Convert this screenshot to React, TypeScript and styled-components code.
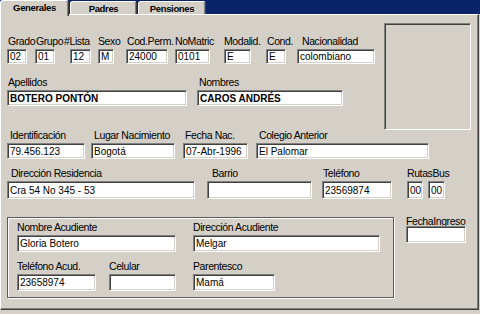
import React from "react";
import styled, { createGlobalStyle } from "styled-components";

const Global = createGlobalStyle`
  html, body { margin: 0; padding: 0; background: #d4d0c8; }
  body {
    width: 480px; height: 314px; overflow: hidden;
    font-family: "Liberation Sans", Arial, sans-serif;
  }
`;

const Window = styled.div`
  width: 480px;
  height: 314px;
  background: #d4d0c8;
  display: flex;
  flex-direction: column;
  overflow: hidden;
`;

const TabStrip = styled.div`
  height: 14px;
  flex: none;
  background: #0a246a;
  display: flex;
  align-items: flex-end;
  position: relative;
  z-index: 2;
`;

const Tab = styled.div<{ $active?: boolean; $w: number; $ml?: number }>`
  width: ${(p) => p.$w}px;
  height: ${(p) => (p.$active ? 16 : 13)}px;
  margin-bottom: ${(p) => (p.$active ? -2 : 0)}px;
  margin-left: ${(p) => p.$ml ?? 0}px;
  box-sizing: border-box;
  background: #d4d0c8;
  border-top: 1px solid #fff;
  border-left: 1px solid #fff;
  border-right: 1px solid #404040;
  box-shadow: inset -1px 0 #808080;
  border-radius: 3px 3px 0 0;
  font: bold 9.5px "Liberation Sans", Arial, sans-serif;
  letter-spacing: -0.35px;
  color: #000;
  display: flex;
  align-items: center;
  justify-content: center;
  padding-bottom: ${(p) => (p.$active ? 2 : 0)}px;
`;

const Panel = styled.div`
  flex: none;
  height: 296px;
  margin-right: 1px;
  box-sizing: border-box;
  border-top: 1px solid #fff;
  border-left: 1px solid #fff;
  border-right: 1px solid #404040;
  border-bottom: 1px solid #404040;
  box-shadow: inset -1px -1px #808080;
  padding-left: 6px;
  display: flex;
  flex-direction: column;
`;

const TopSection = styled.div`
  display: flex;
  align-items: flex-start;
`;

const LeftColumn = styled.div`
  display: flex;
  flex-direction: column;
  padding-top: 20px;
  width: 368px;
`;

const Photo = styled.div`
  width: 87px;
  height: 107px;
  margin-top: 8px;
  margin-left: 9px;
  box-sizing: border-box;
  border-top: 1px solid #808080;
  border-left: 1px solid #808080;
  border-right: 1px solid #fff;
  border-bottom: 1px solid #fff;
  box-shadow: inset 1px 1px #404040, inset -1px -1px #d4d0c8;
`;

const Row = styled.div<{ $mt?: number }>`
  display: flex;
  align-items: flex-start;
  margin-top: ${(p) => p.$mt ?? 0}px;
`;

const Field = styled.div<{ $w: number; $ml?: number }>`
  display: flex;
  flex-direction: column;
  flex: none;
  width: ${(p) => p.$w}px;
  margin-left: ${(p) => p.$ml ?? 0}px;
`;

const Label = styled.div<{ $dx?: number; $gap?: number }>`
  font-size: 10.5px;
  letter-spacing: -0.4px;
  line-height: 12px;
  height: 12px;
  white-space: nowrap;
  color: #000;
  margin-left: ${(p) => p.$dx ?? 0}px;
  margin-bottom: ${(p) => p.$gap ?? 2}px;
`;

const InputPair = styled.div`
  display: flex;
  gap: 5px;
`;

const Input = styled.div<{ $h?: number; $w?: number; $bold?: boolean }>`
  height: ${(p) => p.$h ?? 16}px;
  width: ${(p) => (p.$w ? `${p.$w}px` : "auto")};
  flex: none;
  box-sizing: border-box;
  background: #fff;
  border-top: 1px solid #808080;
  border-left: 1px solid #808080;
  border-right: 1px solid #fff;
  border-bottom: 1px solid #fff;
  box-shadow: inset 1px 1px #404040, inset -1px -1px #d4d0c8;
  font-size: 10px;
  font-weight: ${(p) => (p.$bold ? "bold" : "normal")};
  color: #000;
  padding-left: 2px;
  display: flex;
  align-items: center;
  white-space: nowrap;
  overflow: hidden;
`;

const BottomSection = styled.div`
  display: flex;
  align-items: flex-start;
  margin-top: 15px;
`;

const GroupBox = styled.div`
  width: 387px;
  height: 81px;
  margin-top: 3px;
  box-sizing: border-box;
  border: 1px solid #5a5a5a;
  box-shadow: 1px 1px 0 #fff, inset 1px 1px 0 #fff;
  padding: 3px 0 0 9px;
  display: flex;
  flex-direction: column;
`;

const SideField = styled(Field)`
  margin-top: 1px;
`;

type F = { label: string; value?: string; w: number; ml?: number; dx?: number; h?: number; bold?: boolean };

const FieldBox = ({ label, value, w, ml, dx, h, bold }: F) => (
  <Field $w={w} $ml={ml}>
    <Label $dx={dx}>{label}</Label>
    <Input $h={h} $bold={bold}>{value}</Input>
  </Field>
);

export default function App() {
  return (
    <Window>
      <Global />
      <TabStrip>
        <Tab $active $w={69}>Generales</Tab>
        <Tab $w={67} $ml={1}>Padres</Tab>
        <Tab $w={68} $ml={1}>Pensiones</Tab>
      </TabStrip>
      <Panel>
        <TopSection>
          <LeftColumn>
            <Row>
              <FieldBox label="Grado" value="02" w={20} dx={1} h={15} />
              <FieldBox label="Grupo" value="01" w={20} ml={8} dx={1} h={15} />
              <FieldBox label="#Lista" value="12" w={21} ml={15} dx={-6} h={15} />
              <FieldBox label="Sexo" value="M" w={16} ml={7} h={15} />
              <FieldBox label="Cod.Perm." value="24000" w={42} ml={12} dx={1} h={15} />
              <FieldBox label="NoMatric" value="0101" w={35} ml={7} h={15} />
              <FieldBox label="Modalid." value="E" w={27} ml={14} h={15} />
              <FieldBox label="Cond." value="E" w={20} ml={15} dx={1} h={15} />
              <FieldBox label="Nacionalidad" value="colombiano" w={78} ml={11} dx={5} h={15} />
            </Row>
            <Row $mt={12}>
              <FieldBox label="Apellidos" value="BOTERO PONTÓN" w={180} dx={1} bold />
              <FieldBox label="Nombres" value="CAROS ANDRÉS" w={146} ml={10} dx={2} bold />
            </Row>
          </LeftColumn>
          <Photo />
        </TopSection>
        <Row $mt={-1}>
          <FieldBox label="Identificación" value="79.456.123" w={78} dx={3} />
          <FieldBox label="Lugar Nacimiento" value="Bogotá" w={84} ml={6} dx={3} />
          <FieldBox label="Fecha Nac." value="07-Abr-1996" w={65} ml={8} dx={2} />
          <FieldBox label="Colegio Anterior" value="El Palomar" w={173} ml={8} dx={3} />
        </Row>
        <Row $mt={8}>
          <FieldBox label="Dirección Residencia" value="Cra 54 No 345 - 53" w={188} dx={4} h={18} />
          <FieldBox label="Barrio" w={105} ml={12} dx={5} h={18} />
          <FieldBox label="Teléfono" value="23569874" w={70} ml={10} dx={1} h={18} />
          <Field $w={38} $ml={15}>
            <Label>RutasBus</Label>
            <InputPair>
              <Input $h={18} $w={16}>00</Input>
              <Input $h={18} $w={17}>00</Input>
            </InputPair>
          </Field>
        </Row>
        <BottomSection>
          <GroupBox>
            <Row>
              <FieldBox label="Nombre Acudiente" value="Gloria Botero" w={159} h={17} />
              <FieldBox label="Dirección Acudiente" value="Melgar" w={187} ml={17} h={17} />
            </Row>
            <Row $mt={8}>
              <FieldBox label="Teléfono Acud." value="23658974" w={79} h={17} />
              <FieldBox label="Celular" w={67} ml={13} h={17} />
              <FieldBox label="Parentesco" value="Mamá" w={82} ml={17} h={17} />
            </Row>
          </GroupBox>
          <SideField $w={60} $ml={12}>
            <Label $gap={-1}>FechaIngreso</Label>
            <Input $h={17} />
          </SideField>
        </BottomSection>
      </Panel>
    </Window>
  );
}
